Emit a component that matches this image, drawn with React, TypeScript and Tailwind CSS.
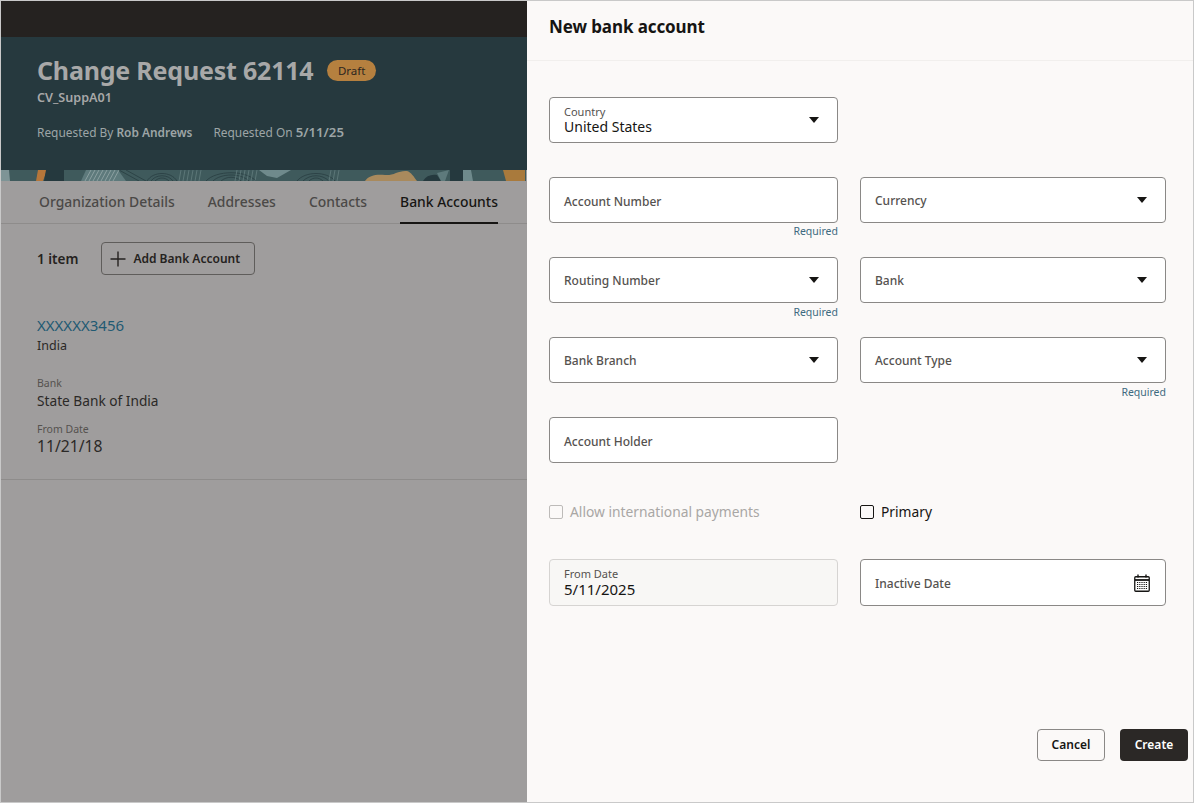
import React from 'react';

const font = { fontFamily: '"Noto Sans", sans-serif' };

const Caret = () => (
  <svg width="10" height="6" viewBox="0 0 10 6" className="shrink-0">
    <path d="M0 0h10L5 6z" fill="#161513" />
  </svg>
);

const CalendarIcon = () => (
  <svg width="16" height="18" viewBox="0 0 16 18" className="shrink-0" fill="none" stroke="#161513">
    <rect x="0.75" y="2.75" width="14.5" height="14.5" rx="1" strokeWidth="1.3" />
    <path d="M1 6h14" strokeWidth="1.8" />
    <path d="M4 0.5v3M12 0.5v3" strokeWidth="1.4" />
    <path d="M3 8.5h10M3 10.5h10M3 12.5h10M3 14.5h10" strokeWidth="1.1" strokeDasharray="1 0.8" />
  </svg>
);

const BannerPattern = () => (
  <svg width="525" height="11" viewBox="0 0 525 11" className="block" preserveAspectRatio="none">
    <rect width="525" height="11" fill="#3f5a5c" />
    <path d="M0 0h8l1 11H0z" fill="#7e9496" />
    <path d="M37 0h9l-4 11h-7z" fill="#b5763a" />
    <path d="M45 0h18v11H43z" fill="#25393e" />
    <path d="M85 0h32l8 11H80z" fill="#5e7a7c" />
    <path d="M258 0h32l-14 8-10-2z" fill="#6f8a8c" />
    <path d="M364 11c4-6 12-7 20-6 8 1 14-5 22-4 4 1 7 6 10 10z" fill="#a98a5d" />
    <path d="M422 11c3-5 8-7 14-6l4 6z" fill="#25393e" />
    <path d="M436 3l12-3-4 11h-4z" fill="#5e7a7c" />
    <path d="M449 0h13v11h-13z" fill="#25393e" />
    <path d="M462 0h8l2 11h-10z" fill="#6f8a8c" />
    <path d="M502 0h22v11h-19z" fill="#a97a3c" />
    <g fill="none" stroke="#25393e" strokeWidth="0.7">
      <path d="M146 11c6-10 24-10 30 0M150 11c5-7 17-7 22 0M154 11c4-4 10-4 14 0" />
      <path d="M205 11c10-11 40-11 50 0M212 11c8-8 28-8 36 0M220 11c6-5 14-5 20 0" />
      <path d="M296 11c8-10 30-10 38 0M302 11c7-7 19-7 26 0M308 11c4-4 10-4 14 0" />
      <path d="M118 0l20 11M125 0l20 11" />
    </g>
    <g stroke="#6f8a8c" strokeWidth="0.6">
      <path d="M180 0l-2 11M184 0l-2 11M188 0l-2 11M192 0l-2 11M196 0l-2 11M200 0l-2 11M236 0l-2 11M240 0l-2 11M244 0l-2 11M248 0l-2 11M252 0l-2 11M256 0l-2 11M330 0l-2 11M334 0l-2 11M338 0l-2 11" />
    </g>
    <g stroke="#9db0b0" strokeWidth="0.7">
      <path d="M90 0l-6 11M94 0l-6 11M98 0l-6 11M102 0l-6 11M106 0l-6 11M110 0l-6 11M114 0l-6 11M118 0l-6 11" />
    </g>
  </svg>
);

function Field({
  label,
  value,
  caret,
  calendar,
  required,
  disabled,
  labelOffset,
}: {
  label: string;
  value?: string;
  caret?: boolean;
  calendar?: boolean;
  required?: boolean;
  disabled?: boolean;
  labelOffset?: boolean;
}) {
  return (
    <div className="flex flex-col">
      <div
        className={`flex items-center justify-between rounded-[4px] border pl-[14px] ${
          calendar ? 'pr-[15px]' : 'pr-[18px]'
        } ${calendar || disabled ? 'h-[47px]' : 'h-[46px]'} ${
          disabled ? 'border-[#d6d4d2] bg-[#f8f7f5]' : 'border-[#8a8886] bg-white'
        }`}
      >
        {value ? (
          <div className="flex flex-col">
            <span className="text-[11px] leading-[13px] text-[#55524f]">{label}</span>
            <span className={`leading-[18px] text-[#161513] ${disabled ? 'text-[15px]' : 'text-[14px]'}`}>{value}</span>
          </div>
        ) : (
          <span
            className={`text-[12px] font-medium text-[#55524f] ${labelOffset && !calendar ? 'pt-[4px]' : 'pt-[2px]'}`}
          >
            {label}
          </span>
        )}
        {caret && <Caret />}
        {calendar && <CalendarIcon />}
      </div>
      {required && (
        <span className={`self-end text-[10.5px] leading-[14px] text-[#3d6a80] ${labelOffset ? 'pt-[1px]' : 'pt-[2px]'}`}>
          Required
        </span>
      )}
    </div>
  );
}

function Check({ label, disabled }: { label: string; disabled?: boolean }) {
  return (
    <div className="flex items-center gap-[7px]">
      <span
        className={`h-[14px] w-[14px] rounded-[2px] border ${disabled ? 'border-[#bdbbb9]' : 'border-[#161513]'}`}
      />
      <span className={`text-[13.8px] ${disabled ? 'text-[#a9a7a5]' : 'text-[#161513]'}`}>{label}</span>
    </div>
  );
}

export default function App() {
  return (
    <div style={font} className="flex h-[803px] w-[1194px] overflow-hidden border border-[#c9c9c9]">
      {/* page behind the drawer, dimmed */}
      <div className="flex w-[526px] shrink-0 flex-col bg-[#9f9d9d]">
        <div className="h-[36px] bg-[#252220]" />
        <div className="h-[133px] bg-[#26393e] pl-[36px] pt-[16px]">
          <div className="flex items-center gap-[14px]">
            <h1 className="text-[25px] font-bold leading-[34px] tracking-[-0.2px] text-[#a8a8a8]">
              Change Request 62114
            </h1>
            <span className="rounded-full bg-[#b5803f] px-[10.5px] text-[11.5px] leading-[21px] text-[#2c2620]">
              Draft
            </span>
          </div>
          <p className="pt-[2px] text-[12.6px] font-semibold leading-[18px] text-[#a8a8a8]">CV_SuppA01</p>
          <div className="mt-[16px] flex gap-[21px] text-[11.9px] leading-[18px] text-[#9da5a6]">
            <span>
              Requested By <b className="font-semibold">Rob Andrews</b>
            </span>
            <span>
              Requested On <b className="text-[13.2px] font-semibold">5/11/25</b>
            </span>
          </div>
        </div>
        <BannerPattern />
        <div className="flex h-[43px] items-stretch gap-[33px] border-b border-[#8e8c8b] pl-[38px] text-[13.9px] font-medium">
          <span className="pt-[11px] text-[#4b4947]">Organization Details</span>
          <span className="pt-[11px] text-[#4b4947]">Addresses</span>
          <span className="pt-[11px] text-[#4b4947]">Contacts</span>
          <span className="-mb-px border-b-2 border-[#161513] pt-[11px] text-[#161513]">Bank Accounts</span>
        </div>
        <div className="flex items-center gap-[23px] pl-[36px] pt-[18px]">
          <span className="pt-[2px] text-[13.5px] font-semibold text-[#252220]">1 item</span>
          <div className="flex h-[33px] w-[154px] items-center gap-[7px] rounded-[4px] border border-[#5f5d5b] pl-[8px] text-[12px] font-semibold text-[#252220]">
            <svg width="16" height="16" viewBox="0 0 16 16" fill="none" stroke="#252220" strokeWidth="1.4">
              <path d="M8 0.5v15M0.5 8h15" />
            </svg>
            Add Bank Account
          </div>
        </div>
        <div className="mt-[39px] h-[166px] border-b border-[#8e8c8b] pl-[36px]">
          <div className="text-[15px] leading-[22px] text-[#1f5a73]">XXXXXX3456</div>
          <div className="pt-[1px] text-[12.5px] leading-[17px] font-normal text-[#2b2927]">India</div>
          <div className="mt-[22px] text-[10.5px] leading-[14px] text-[#55524f]">Bank</div>
          <div className="text-[13.7px] leading-[22px] text-[#2b2927]">State Bank of India</div>
          <div className="mt-[10px] text-[10.5px] leading-[14px] text-[#55524f]">From Date</div>
          <div className="text-[15.7px] leading-[20px] text-[#2b2927]">11/21/18</div>
        </div>
      </div>

      {/* drawer */}
      <div className="flex flex-1 flex-col bg-[#fbf9f8]">
        <div className="flex h-[60px] shrink-0 items-start border-b border-[#f1efed] pl-[22px] pt-[13px]">
          <h2 className="text-[17px] font-bold leading-[26px] tracking-[-0.1px] text-[#161513]">New bank account</h2>
        </div>
        <div className="grid grid-cols-[289px_306px] gap-x-[22px] pl-[22px] pt-[36px]">
          <div className="h-[80px]">
            <Field label="Country" value="United States" caret />
          </div>
          <div />
          <div className="h-[80px]">
            <Field label="Account Number" required labelOffset />
          </div>
          <div className="h-[80px]">
            <Field label="Currency" caret />
          </div>
          <div className="h-[80px]">
            <Field label="Routing Number" caret required />
          </div>
          <div className="h-[80px]">
            <Field label="Bank" caret />
          </div>
          <div className="h-[80px]">
            <Field label="Bank Branch" caret />
          </div>
          <div className="h-[80px]">
            <Field label="Account Type" caret required />
          </div>
          <div className="h-[80px]">
            <Field label="Account Holder" labelOffset />
          </div>
          <div />
          <div className="flex h-[62px] items-start pt-[5px]">
            <Check label="Allow international payments" disabled />
          </div>
          <div className="flex h-[62px] items-start pt-[5px]">
            <Check label="Primary" />
          </div>
          <div>
            <Field label="From Date" value="5/11/2025" disabled />
          </div>
          <div>
            <Field label="Inactive Date" calendar labelOffset />
          </div>
        </div>
        <div className="mt-auto flex justify-end gap-[15px] pb-[41px] pr-[5px] text-[12px] font-semibold">
          <span className="flex h-[32px] w-[68px] items-center justify-center rounded-[4px] border border-[#8a8886] text-[#161513]">
            Cancel
          </span>
          <span className="flex h-[32px] w-[68px] items-center justify-center rounded-[4px] bg-[#2b2826] text-white">
            Create
          </span>
        </div>
      </div>
    </div>
  );
}
